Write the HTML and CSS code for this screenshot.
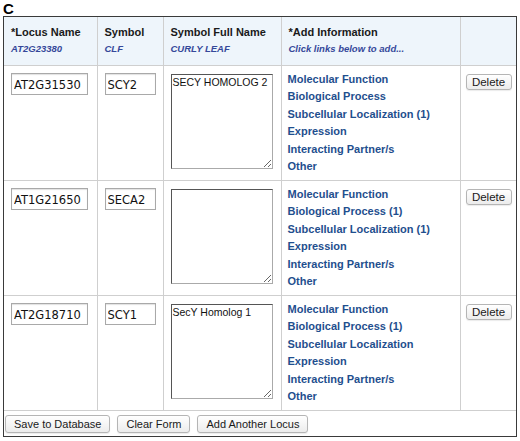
FILE: index.html
```html
<!DOCTYPE html>
<html>
<head>
<meta charset="utf-8">
<link rel="stylesheet" href="styles.css">
</head>
<body>
<div class="fig-label">C</div>
<div class="frame">
<table class="grid">
  <colgroup>
    <col class="c1"><col class="c2"><col class="c3"><col class="c4"><col class="c5">
  </colgroup>
  <thead>
    <tr>
      <th><div class="h">*Locus Name</div><div class="sub">AT2G23380</div></th>
      <th><div class="h">Symbol</div><div class="sub">CLF</div></th>
      <th><div class="h">Symbol Full Name</div><div class="sub">CURLY LEAF</div></th>
      <th><div class="h">*Add Information</div><div class="sub">Click links below to add...</div></th>
      <th></th>
    </tr>
  </thead>
  <tbody>
    <tr>
      <td><input class="in locus" type="text" value="AT2G31530"></td>
      <td><input class="in sym" type="text" value="SCY2"></td>
      <td><textarea class="ta">SECY HOMOLOG 2</textarea></td>
      <td class="links">
        <a href="#">Molecular Function</a>
        <a href="#">Biological Process</a>
        <a href="#">Subcellular Localization (1)</a>
        <a href="#">Expression</a>
        <a href="#">Interacting Partner/s</a>
        <a href="#">Other</a>
      </td>
      <td class="act"><button class="btn del">Delete</button></td>
    </tr>
    <tr>
      <td><input class="in locus" type="text" value="AT1G21650"></td>
      <td><input class="in sym" type="text" value="SECA2"></td>
      <td><textarea class="ta"></textarea></td>
      <td class="links">
        <a href="#">Molecular Function</a>
        <a href="#">Biological Process (1)</a>
        <a href="#">Subcellular Localization (1)</a>
        <a href="#">Expression</a>
        <a href="#">Interacting Partner/s</a>
        <a href="#">Other</a>
      </td>
      <td class="act"><button class="btn del">Delete</button></td>
    </tr>
    <tr>
      <td><input class="in locus" type="text" value="AT2G18710"></td>
      <td><input class="in sym" type="text" value="SCY1"></td>
      <td><textarea class="ta">SecY Homolog 1</textarea></td>
      <td class="links">
        <a href="#">Molecular Function</a>
        <a href="#">Biological Process (1)</a>
        <a href="#">Subcellular Localization</a>
        <a href="#">Expression</a>
        <a href="#">Interacting Partner/s</a>
        <a href="#">Other</a>
      </td>
      <td class="act"><button class="btn del">Delete</button></td>
    </tr>
  </tbody>
</table>
<div class="footer">
  <button class="btn big">Save to Database</button>
  <button class="btn big">Clear Form</button>
  <button class="btn big">Add Another Locus</button>
</div>
</div>
</body>
</html>
```

FILE: styles.css
```css
html, body {
  margin: 0;
  padding: 0;
  background: #ffffff;
}
body {
  padding: 2px 3px 0 3px;
  font-family: "Liberation Sans", Arial, sans-serif;
  color: #111;
}
.fig-label {
  font-weight: bold;
  font-size: 15px;
  line-height: 14px;
  height: 14px;
  color: #000;
}
.frame {
  width: 512px;
  border: 1px solid #3a3a3a;
  background: #fff;
}
.grid {
  width: 512px;
  border-collapse: collapse;
  table-layout: fixed;
}
.c1 { width: 93px; }
.c2 { width: 66px; }
.c3 { width: 118px; }
.c4 { width: 179px; }
.c5 { width: 56px; }
.grid th, .grid td {
  border: 1px solid #cfcfcf;
  vertical-align: top;
  text-align: left;
  padding: 0;
}
.grid tr > :first-child { border-left: none; }
.grid tr > :last-child { border-right: none; }
.grid thead tr > * { border-top: none; }
.grid th {
  background: #eef5fb;
  height: 48px;
  padding: 8px 0 0 7px;
  box-sizing: border-box;
}
.h {
  font-weight: bold;
  font-size: 11px;
  line-height: 14px;
  color: #1a1a1a;
}
.sub {
  font-style: italic;
  font-size: 9.5px;
  line-height: 13px;
  margin-top: 3px;
  color: #35489a;
}
.grid td {
  height: 115px;
  box-sizing: border-box;
  padding: 7px 0 0 7px;
}
.in {
  display: block;
  box-sizing: border-box;
  height: 22px;
  border: 1px solid #a9a9a9;
  box-shadow: inset 0 1px 1px rgba(0,0,0,0.12);
  font-family: "DejaVu Sans", Verdana, sans-serif;
  font-size: 11.5px;
  padding: 2px 2px 0 2px;
  color: #111;
  background: #fff;
  margin: 0;
}
.locus { width: 77px; }
.sym { width: 51px; }
.ta {
  display: block;
  box-sizing: border-box;
  width: 102px;
  height: 95px;
  margin: 1px 0 0 0;
  border: 1px solid #555;
  border-right-color: #aaa;
  border-bottom-color: #aaa;
  font-family: "Liberation Sans", Arial, sans-serif;
  font-size: 10.5px;
  line-height: 13px;
  padding: 1px 1px;
  resize: vertical;
  overflow: hidden;
  color: #111;
}
.grid td.links {
  padding: 5px 0 0 6px;
}
.links a {
  display: block;
  font-weight: bold;
  font-size: 11px;
  line-height: 17.6px;
  color: #1f4f8e;
  text-decoration: none;
}
.grid td.act {
  padding: 6px 0 0 5px;
}
.btn {
  font-family: "Liberation Sans", Arial, sans-serif;
  background: linear-gradient(#ffffff, #ececec);
  border: 1px solid #b5b5b5;
  border-radius: 3px;
  color: #1a1a1a;
  margin: 0;
  box-shadow: 0 1px 1px rgba(0,0,0,0.08);
}
.del {
  font-size: 11.5px;
  height: 16px;
  width: 46px;
  padding: 0;
  line-height: 14px;
}
.footer {
  display: flex;
  gap: 7px;
  padding: 4px 0 2px 1px;
  height: 25px;
  box-sizing: border-box;
}
.big {
  font-size: 11px;
  height: 18px;
  padding: 0 8px;
  line-height: 16px;
}
```
